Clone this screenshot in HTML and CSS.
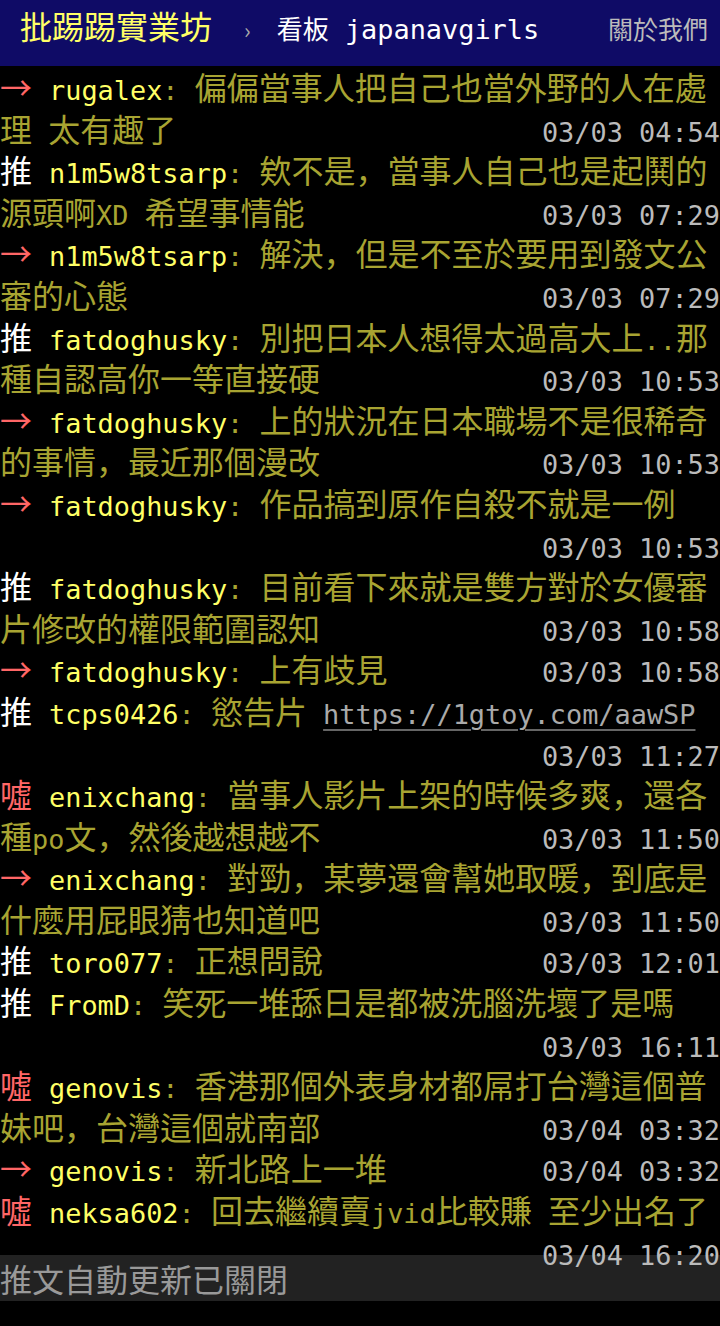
FILE: index.html
```html
<!DOCTYPE html>
<html>
<head>
    <meta charset="UTF-8">
    <meta name="viewport" content="width=device-width, initial-scale=1.0">
    <title>看板 japanavgirls - 批踢踢實業坊</title>
    <link rel="stylesheet" href="styles.css">
</head>
<body>
    <div id="topbar">
        <a class="logo" href="#">批踢踢實業坊</a>
        <span class="caret">›</span>
        <a class="board" href="#">看板<span class="en"> japanavgirls</span></a>
        <a class="about" href="#">關於我們</a>
    </div>
    <div id="main-content">
        <div class="push"><span class="push-tag red">→</span><span class="push-userid">rugalex</span><span class="push-content"><span class="en">: </span>偏偏當事人把自己也當外野的人在處理 太有趣了</span><span class="push-ipdatetime">03/03 04:54</span></div>
        <div class="push"><span class="push-tag">推</span><span class="push-userid">n1m5w8tsarp</span><span class="push-content"><span class="en">: </span>欸不是，當事人自己也是起鬨的源頭啊<span class="en">XD</span> 希望事情能</span><span class="push-ipdatetime">03/03 07:29</span></div>
        <div class="push"><span class="push-tag red">→</span><span class="push-userid">n1m5w8tsarp</span><span class="push-content"><span class="en">: </span>解決，但是不至於要用到發文公審的心態</span><span class="push-ipdatetime">03/03 07:29</span></div>
        <div class="push"><span class="push-tag">推</span><span class="push-userid">fatdoghusky</span><span class="push-content"><span class="en">: </span>別把日本人想得太過高大上<span class="en">..</span>那種自認高你一等直接硬</span><span class="push-ipdatetime">03/03 10:53</span></div>
        <div class="push"><span class="push-tag red">→</span><span class="push-userid">fatdoghusky</span><span class="push-content"><span class="en">: </span>上的狀況在日本職場不是很稀奇的事情，最近那個漫改</span><span class="push-ipdatetime">03/03 10:53</span></div>
        <div class="push"><span class="push-tag red">→</span><span class="push-userid">fatdoghusky</span><span class="push-content"><span class="en">: </span>作品搞到原作自殺不就是一例</span><span class="push-ipdatetime">03/03 10:53</span></div>
        <div class="push"><span class="push-tag">推</span><span class="push-userid">fatdoghusky</span><span class="push-content"><span class="en">: </span>目前看下來就是雙方對於女優審片修改的權限範圍認知</span><span class="push-ipdatetime">03/03 10:58</span></div>
        <div class="push"><span class="push-tag red">→</span><span class="push-userid">fatdoghusky</span><span class="push-content"><span class="en">: </span>上有歧見</span><span class="push-ipdatetime">03/03 10:58</span></div>
        <div class="push"><span class="push-tag">推</span><span class="push-userid">tcps0426</span><span class="push-content"><span class="en">: </span>慾告片 <a class="en link" href="#">https://1gtoy.com/aawSP</a></span><span class="push-ipdatetime">03/03 11:27</span></div>
        <div class="push"><span class="push-tag red">噓</span><span class="push-userid">enixchang</span><span class="push-content"><span class="en">: </span>當事人影片上架的時候多爽，還各種<span class="en">po</span>文，然後越想越不</span><span class="push-ipdatetime">03/03 11:50</span></div>
        <div class="push"><span class="push-tag red">→</span><span class="push-userid">enixchang</span><span class="push-content"><span class="en">: </span>對勁，某夢還會幫她取暖，到底是什麼用屁眼猜也知道吧</span><span class="push-ipdatetime">03/03 11:50</span></div>
        <div class="push"><span class="push-tag">推</span><span class="push-userid">toro077</span><span class="push-content"><span class="en">: </span>正想問說</span><span class="push-ipdatetime">03/03 12:01</span></div>
        <div class="push"><span class="push-tag">推</span><span class="push-userid">FromD</span><span class="push-content"><span class="en">: </span>笑死一堆舔日是都被洗腦洗壞了是嗎</span><span class="push-ipdatetime">03/03 16:11</span></div>
        <div class="push"><span class="push-tag red">噓</span><span class="push-userid">genovis</span><span class="push-content"><span class="en">: </span>香港那個外表身材都屌打台灣這個普妹吧，台灣這個就南部</span><span class="push-ipdatetime">03/04 03:32</span></div>
        <div class="push"><span class="push-tag red">→</span><span class="push-userid">genovis</span><span class="push-content"><span class="en">: </span>新北路上一堆</span><span class="push-ipdatetime">03/04 03:32</span></div>
        <div class="push"><span class="push-tag red">噓</span><span class="push-userid">neksa602</span><span class="push-content"><span class="en">: </span>回去繼續賣<span class="en">jvid</span>比較賺 至少出名了</span><span class="push-ipdatetime">03/04 16:20</span></div>
    </div>
    <div id="article-polling">推文自動更新已關閉</div>
</body>
</html>
```

FILE: styles.css
```css
body {
    margin: 0;
    background: #000;
    color: #ccc;
    font-family: "Noto Sans CJK JP", sans-serif;
}
a {
    text-decoration: none;
}
.en {
    font-family: "DejaVu Sans Mono", monospace;
    font-size: 26.9px;
    line-height: 30px;
    word-spacing: 0;
}
#topbar {
    display: flex;
    align-items: baseline;
    box-sizing: border-box;
    height: 66px;
    padding: 4px 12px 0 20px;
    background: #0f0b66;
    line-height: 42px;
}
.logo {
    color: #ff6;
    font-size: 32px;
}
.caret {
    color: #aaa;
    font-size: 22px;
    margin: 0 26px 0 32px;
}
.board {
    color: #fff;
    font-size: 26px;
}
.board .en {
    line-height: 42px;
}
.about {
    margin-left: auto;
    color: #bbb;
    font-size: 25px;
}
#main-content {
    padding-top: 4px;
}
.push {
    clear: both;
    font-family: "DejaVu Sans Mono", monospace;
    font-size: 26.9px;
    line-height: 41.6px;
}
.push-tag {
    margin-right: 17px;
    color: #fff;
    font-family: "Noto Sans CJK JP", sans-serif;
    font-size: 32px;
    line-height: 32px;
}
.push-tag.red {
    color: #f66;
}
.push-userid {
    color: #ff6;
}
.push-content {
    color: #a8a432;
    font-family: "Noto Sans CJK JP", sans-serif;
    font-size: 32px;
    line-height: 32px;
    word-spacing: 9px;
}
.push-ipdatetime {
    float: right;
    color: #bbb;
}
.link {
    color: #aaa;
    text-decoration: underline;
    text-decoration-color: #666;
    text-decoration-thickness: 2px;
    text-underline-offset: 5px;
}
#article-polling {
    margin-top: 20px;
    background: #222;
    color: #999;
    font-size: 32px;
    line-height: 46px;
}
```
